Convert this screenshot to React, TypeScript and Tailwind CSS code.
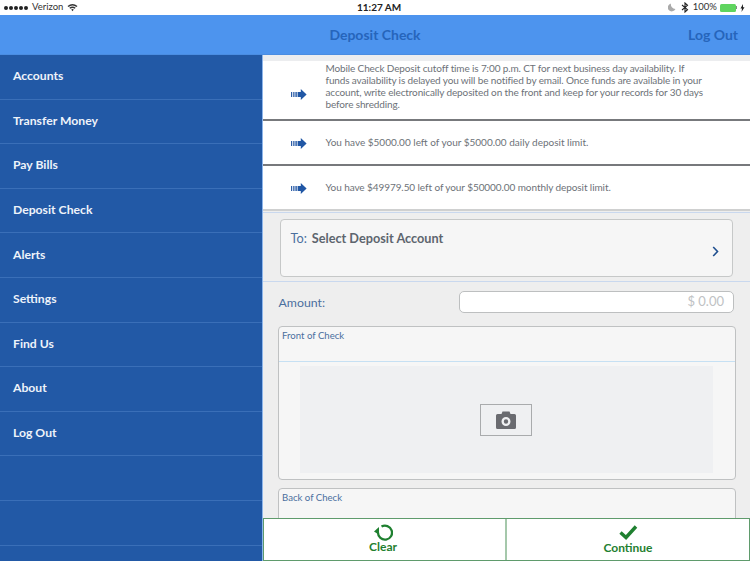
import React from "react";

const font = { fontFamily: 'Lato, "Noto Sans", sans-serif' };

function Arrow() {
  return (
    <svg width="16" height="11" viewBox="0 0 16 11" className="shrink-0">
      <rect x="0" y="3" width="1.2" height="5" fill="#2f5fa8" />
      <rect x="2.2" y="3" width="1.3" height="5" fill="#2f5fa8" />
      <rect x="4.4" y="3" width="1.4" height="5" fill="#2459a6" />
      <path d="M6.6 3H9.8V0L15.6 5.5L9.8 11V8H6.6Z" fill="#2157a5" />
    </svg>
  );
}

function Note({ children, h, line, first, tracking }: { children: React.ReactNode; h: string; line: string; first?: boolean; tracking: string }) {
  return (
    <div className={`flex items-center bg-white ${h} ${line}`}>
      <div className={`w-[62.5px] pl-[27.5px] shrink-0 flex items-center ${first ? "pt-[9px]" : "pt-[2px]"}`}>
        <Arrow />
      </div>
      <div className={`text-[10px] leading-[12.2px] text-[#6d7278] whitespace-nowrap ${tracking} ${first ? "pb-[8px]" : "pb-0"}`}>{children}</div>
    </div>
  );
}

function StatusBar() {
  return (
    <div className="h-[15px] bg-white flex items-center justify-between relative text-[9.5px] text-[#333] px-[4px] shrink-0">
      <div className="flex items-center gap-[4px]">
        <div className="flex gap-[1px]">
          {[0, 1, 2, 3, 4].map((i) => (
            <div key={i} className="w-[4px] h-[4px] rounded-full bg-[#222]" />
          ))}
        </div>
        <span>Verizon</span>
        <svg width="11" height="9" viewBox="0 0 11 9">
          <path d="M0.5 3Q5.5-1 10.5 3L9.5 4Q5.5 1 1.5 4Z M2.3 4.8Q5.5 2.2 8.7 4.8L7.7 5.8Q5.5 4.2 3.3 5.8Z M4.2 6.6Q5.5 5.6 6.8 6.6L5.5 8.2Z" fill="#333" />
        </svg>
      </div>
      <div className="absolute left-[357px] top-0 h-[15px] flex items-center font-bold text-[10px] text-[#222]">11:27 AM</div>
      <div className="flex items-center gap-[3px] pr-[1px]">
        <svg width="8" height="9" viewBox="0 0 8 9">
          <path d="M3 0.5A4 4 0 1 0 7.5 6A4.5 4.5 0 0 1 3 0.5Z" fill="#aaa" />
        </svg>
        <svg width="8" height="11" viewBox="0 0 8 11" className="ml-[2px]">
          <path d="M1 3L6.5 7.7L4 10V1L6.5 3.3L1 8" fill="none" stroke="#222" strokeWidth="1.1" />
        </svg>
        <span className="ml-[1px]">100%</span>
        <div className="flex items-center">
          <div className="w-[16px] h-[8px] rounded-[1.5px] bg-[#5fd55f]" />
          <div className="w-[1px] h-[3px] bg-[#888]" />
        </div>
        <svg width="5" height="8" viewBox="0 0 5 8">
          <path d="M3 0L0.5 4.5H2L1.5 8L4.5 3.2H3Z" fill="#222" />
        </svg>
      </div>
    </div>
  );
}

const menu = ["Accounts", "Transfer Money", "Pay Bills", "Deposit Check", "Alerts", "Settings", "Find Us", "About", "Log Out", "", ""];

export default function App() {
  return (
    <div style={font} className="w-[750px] h-[563px] overflow-hidden flex flex-col bg-white">
      <StatusBar />
      <div className="h-[40px] bg-[#4d94ee] shrink-0 relative flex items-center justify-center border-b border-b-[#4a8de2]">
        <span className="text-[14px] font-bold text-[#2665bb]">Deposit Check</span>
        <span className="absolute right-[12px] text-[14px] font-bold text-[#2665bb]">Log Out</span>
      </div>
      <div className="flex h-[506px] shrink-0">
        <div className="w-[262px] bg-[#2259a6] shrink-0">
          {menu.map((m, i) => (
            <div
              key={i}
              className="h-[44.6px] flex items-center pl-[13px] pb-[1px] text-[12.2px] font-bold text-[#eef3fa] border-b border-b-[#3a6fb8]"
            >
              {m}
            </div>
          ))}
        </div>
        <div className="flex-1 min-w-0 flex flex-col border-l border-l-[#8db5ea] bg-[#eeeeee]">
          <div className="flex-1 min-h-0 overflow-hidden">
            <div className="h-[6px] bg-[#ecedef]" />
            <Note first h="h-[60px]" line="border-b-2 border-b-[#77797c]" tracking="tracking-[-0.13px]">
              Mobile Check Deposit cutoff time is 7:00 p.m. CT for next business day availability. If
              <br />
              funds availability is delayed you will be notified by email. Once funds are available in your
              <br />
              account, write electronically deposited on the front and keep for your records for 30 days
              <br />
              before shredding.
            </Note>
            <Note h="h-[44.5px]" line="border-b-2 border-b-[#77797c]" tracking="tracking-normal">
              You have $5000.00 left of your $5000.00 daily deposit limit.
            </Note>
            <Note h="h-[45.5px]" line="border-b-2 border-b-[#cfd0d0]" tracking="tracking-[-0.08px]">
              You have $49979.50 left of your $50000.00 monthly deposit limit.
            </Note>
            <div className="border-t border-t-[#c9d8ee] mt-[1px] border-b border-b-[#c9d8ee] pt-[6px] pb-[4px] pl-[16.5px] pr-[17px]">
              <div className="h-[58px] bg-[#f6f6f6] border border-[#c6c8c8] rounded-[4px] flex justify-between pl-[10px] pr-[13px]">
                <div className="pt-[10px] flex items-baseline text-[12.7px] leading-[16px]">
                  <span className="text-[#4b6f9e]">To:</span>
                  <span className="ml-[5px] font-bold text-[#5d656e]">Select Deposit Account</span>
                </div>
                <svg width="7" height="11" viewBox="0 0 7 11" className="mt-[26px]">
                  <path d="M1.2 1L5.5 5.5L1.2 10" fill="none" stroke="#1f4f8f" strokeWidth="1.6" />
                </svg>
              </div>
            </div>
            <div className="flex items-center justify-between pt-[9px] pl-[15.5px] pr-[16px]">
              <span className="text-[12.3px] text-[#4b6f9e] pt-[2px]">Amount:</span>
              <div className="w-[275px] h-[22px] bg-white border border-[#bdbfc0] rounded-[5px] flex items-center justify-end pr-[9px] text-[13px] text-[#c0c2c4]">
                $ 0.00
              </div>
            </div>
            <div className="mx-[14.5px] mt-[13px] h-[154px] bg-[#f6f6f6] border border-[#bfc1c2] rounded-[4px]">
              <div className="h-[35px] border-b border-b-[#c6e0f3] pl-[3.5px] pt-[2px] text-[9.6px] leading-[14px] text-[#4b6f9e]">
                Front of Check
              </div>
              <div className="mx-[21.5px] mt-[4px] h-[107px] bg-[#eff0f2] flex items-center justify-center">
                <div className="w-[52px] h-[32px] border border-[#a9abad] flex items-center justify-center -translate-x-px">
                  <svg width="20" height="18" viewBox="0 0 20 18">
                    <path
                      fillRule="evenodd"
                      d="M1.5 3H5.5L6.5 0.5H13.5L14.5 3H18.5Q20 3 20 4.5V16.5Q20 18 18.5 18H1.5Q0 18 0 16.5V4.5Q0 3 1.5 3ZM10 6A4.5 4.5 0 1 0 10 15A4.5 4.5 0 1 0 10 6ZM10 8.3A2.2 2.2 0 1 1 10 12.7A2.2 2.2 0 1 1 10 8.3Z"
                      fill="#6a6b70"
                    />
                  </svg>
                </div>
              </div>
            </div>
            <div className="mx-[14.5px] mt-[7.5px] h-[60px] bg-[#f6f6f6] border border-[#bfc1c2] rounded-[4px] pl-[3.5px] pt-[2px] text-[9.6px] leading-[14px] text-[#4b6f9e]">
              Back of Check
            </div>
          </div>
          <div className="h-[43px] shrink-0 bg-white flex border border-[#5f9b6c] text-[#1f8030] font-bold text-[12px] leading-[12px]">
            <div className="w-[243px] border-r-2 border-r-[#a5c8ab] flex flex-col items-center pt-[5px] pr-[3px]">
              <svg width="19" height="18" viewBox="0 0 19 18">
                <path d="M7.5 2.6A7 7 0 1 1 4 8.5" fill="none" stroke="#1f8030" strokeWidth="2.3" />
                <path d="M0 8L5 3.6V11.2Z" fill="#1f8030" transform="translate(0 -0.5)" />
              </svg>
              <span className="mt-[-1px]">Clear</span>
            </div>
            <div className="flex-1 flex flex-col items-center pt-[6px]">
              <svg width="19" height="15" viewBox="0 0 19 15">
                <path d="M1.5 7.5L7 12.5L17 1.5" fill="none" stroke="#1f8030" strokeWidth="3.4" />
              </svg>
              <span className="mt-[2px]">Continue</span>
            </div>
          </div>
        </div>
      </div>
    </div>
  );
}
